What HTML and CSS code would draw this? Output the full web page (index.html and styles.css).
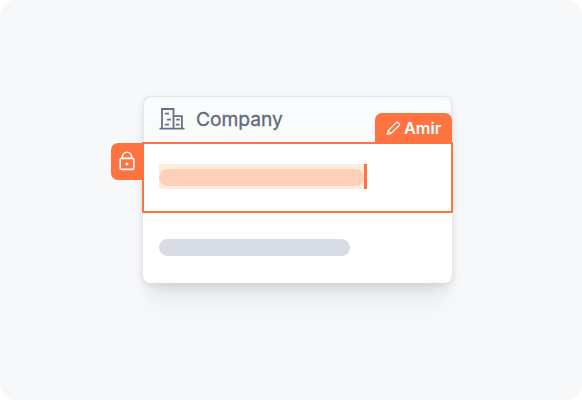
FILE: index.html
```html
<!DOCTYPE html>
<html lang="en">
<head>
<meta charset="utf-8">
<title>Company</title>
<link rel="stylesheet" href="styles.css">
</head>
<body>
<main class="stage">
  <section class="card">
    <header class="card-header">
      <svg class="building" viewBox="0 0 26 24" width="26" height="24" fill="none" stroke="#687083" stroke-width="1.8">
        <path d="M0.5 21.7H25.5M3 21.7V2H14.5V21.7M14.5 9.2H22.9V21.7"/>
        <path d="M5.8 6.6H10M8 12.6H12M5.8 17.6H10M17.2 12.6H20.8M16.8 17.6H20.6" stroke-width="1.6"/>
      </svg>
      <h1 class="title">Company</h1>
    </header>
    <div class="row row-active">
      <div class="selection"><div class="bar bar-active"></div></div>
      <div class="lock-tab">
        <svg viewBox="0 0 16 20" width="16" height="20" fill="none" stroke="#fff" stroke-width="1.6">
          <rect x="1.2" y="7.4" width="13.6" height="11" rx="1.3"/>
          <path d="M3.4 7.4V5.8a4.6 4.6 0 0 1 9.2 0V7.4"/>
          <circle cx="8" cy="13" r="1.5" fill="#fff" stroke="none"/>
        </svg>
      </div>
      <div class="user-tab">
        <svg viewBox="0 0 15 15" width="15" height="15" fill="none" stroke="#fff" stroke-width="1.3" stroke-linejoin="round">
          <path d="M1.2 13.3L2.2 9.6L10.2 1.6Q11.1 .7 12 1.6L13.1 2.7Q14 3.6 13.1 4.5L5.1 12.4ZM2.2 9.6L5.1 12.4"/>
        </svg>
        <span>Amir</span>
      </div>
    </div>
    <div class="row"><div class="bar"></div></div>
  </section>
</main>
</body>
</html>
```
FILE: styles.css
```css
* {
  box-sizing: border-box;
}

body {
  margin: 0;
  background: #fff;
  font-family: Inter, "Liberation Sans", sans-serif;
}

.stage {
  height: 400px;
  padding: 96px 130px 0 143px;
  border-radius: 16px;
  background: #f6f8fa;
}

.card {
  width: 309px;
  height: 187px;
  border-radius: 8px;
  background: #fff;
  box-shadow: 0 2px 7px rgba(40, 45, 50, .09), 0 11px 14px -3px rgba(40, 45, 45, .07), 0 28px 22px -8px rgba(40, 45, 45, .05);
}

.card-header {
  display: flex;
  align-items: center;
  gap: 11px;
  height: 47px;
  padding: 0 0 3px 15px;
  border: 1.5px solid #e2e6ee;
  border-bottom: 0;
  border-radius: 8px 8px 0 0;
  background: #f9fbfc;
}

.title {
  margin: 0;
  color: #606a7b;
  font-size: 19.2px;
  font-weight: 400;
  line-height: 24px;
  -webkit-text-stroke: .3px #606a7b;
}

.row {
  display: flex;
  align-items: center;
  height: 69px;
  padding-left: 16px;
}

.row-active {
  position: relative;
  height: 71px;
  margin: -1px -1px 0;
  padding: 0 0 2px 15px;
  border: 2px solid #ff7340;
  background: #fff;
}

.selection {
  width: 208px;
  padding: 5px 0 3px;
  border-right: 3px solid #ff7340;
  background: #ffecdd;
}

.bar {
  width: 190.5px;
  height: 17px;
  border-radius: 9px;
  background: #d8dde5;
}

.bar-active {
  width: 205px;
  background: #ffd0b8;
}

.lock-tab {
  position: absolute;
  top: -1px;
  left: -33.5px;
  display: flex;
  align-items: center;
  justify-content: center;
  width: 33.5px;
  height: 36.5px;
  border-radius: 7px 0 0 7px;
  background: #ff7340;
}

.user-tab {
  position: absolute;
  right: -1px;
  bottom: 67px;
  display: flex;
  align-items: center;
  gap: 3px;
  width: 77px;
  height: 31px;
  padding: 0 0 1px 11px;
  border-radius: 7px 7px 0 0;
  background: #ff7340;
  color: #fff;
  font-size: 16.3px;
  font-weight: 600;
  line-height: 20px;
}
```
